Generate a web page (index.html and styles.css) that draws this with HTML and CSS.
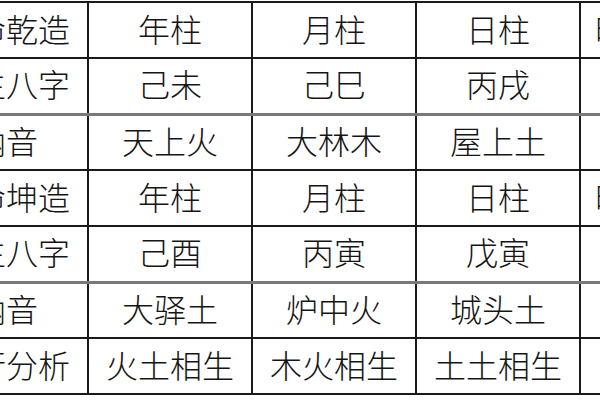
FILE: index.html
```html
<!DOCTYPE html>
<html lang="zh">
<head>
<meta charset="utf-8">
<link rel="stylesheet" href="styles.css">
</head>
<body>
<table class="bazi">
  <colgroup>
    <col class="c-label"><col class="c-pillar"><col class="c-pillar"><col class="c-pillar"><col class="c-last">
  </colgroup>
  <tr><td>男命乾造</td><td>年柱</td><td>月柱</td><td>日柱</td><td class="last">时柱</td></tr>
  <tr><td>出生八字</td><td>己未</td><td>己巳</td><td>丙戌</td><td class="last"></td></tr>
  <tr class="sep"><td>纳音</td><td>天上火</td><td>大林木</td><td>屋上土</td><td class="last"></td></tr>
  <tr><td>女命坤造</td><td>年柱</td><td>月柱</td><td>日柱</td><td class="last">时柱</td></tr>
  <tr><td>出生八字</td><td>己酉</td><td>丙寅</td><td>戊寅</td><td class="last"></td></tr>
  <tr class="sep"><td>纳音</td><td>大驿土</td><td>炉中火</td><td>城头土</td><td class="last"></td></tr>
  <tr><td>五行分析</td><td>火土相生</td><td>木火相生</td><td>土土相生</td><td class="last"></td></tr>
</table>
</body>
</html>
```

FILE: styles.css
```css
html, body {
  margin: 0;
  padding: 0;
  background: #ffffff;
  overflow: hidden;
  width: 600px;
  height: 400px;
}

.bazi {
  border-collapse: collapse;
  table-layout: fixed;
  margin: 1px 0 0 -77px;
  width: 764px;
  font-family: "Noto Sans CJK SC", "Noto Sans", sans-serif;
  font-weight: 300;
  font-size: 32px;
  color: #151515;
}

.c-label, .c-pillar { width: 164px; }
.c-last { width: 108px; }

.bazi tr {
  height: 56px;
}

.bazi td {
  padding: 0 0 5px 0;
  border: 2px solid #1a1a1a;
  text-align: center;
  vertical-align: middle;
  line-height: 40px;
  white-space: nowrap;
}

.bazi tr.sep td {
  border-top: 3px solid #7a7a7a;
}

.bazi td.last {
  text-align: left;
  padding-left: 14px;
}
```
